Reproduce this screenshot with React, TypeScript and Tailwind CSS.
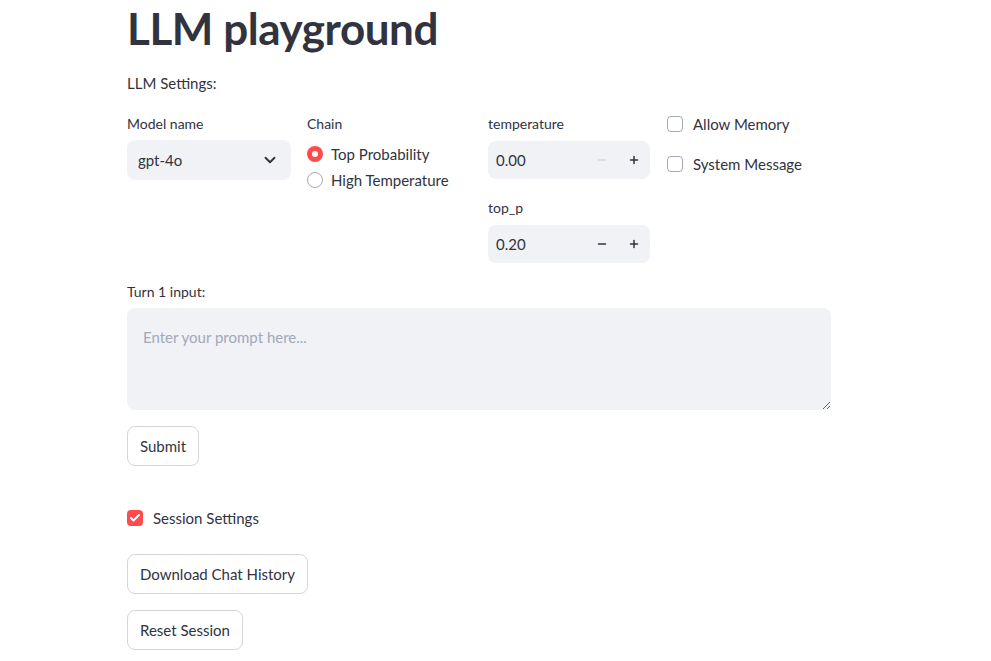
import { ChevronDown, Minus, Plus, Check } from "lucide-react";

const font = { fontFamily: '"Source Sans Pro", Lato, "Noto Sans", sans-serif' };

const NumberInput = ({ value, minusDisabled }: { value: string; minusDisabled?: boolean }) => (
  <div className="w-[162px] h-[38px] bg-[#f0f2f6] rounded-lg flex items-center pl-2">
    <span className="flex-1 text-[15px] text-[#31333f]">{value}</span>
    <button className={"w-8 h-full flex items-center justify-center " + (minusDisabled ? "text-[#d5d6d9]" : "text-[#31333f]")}>
      <Minus size={12} strokeWidth={3} />
    </button>
    <button className="w-8 h-full flex items-center justify-center text-[#31333f]">
      <Plus size={12} strokeWidth={3} />
    </button>
  </div>
);

const Radio = ({ label, checked }: { label: string; checked?: boolean }) => (
  <label className="flex items-center gap-2 h-[26px]">
    {checked ? (
      <span className="w-4 h-4 rounded-full bg-[#ff4b4b] flex items-center justify-center">
        <span className="w-1.5 h-1.5 rounded-full bg-white" />
      </span>
    ) : (
      <span className="w-4 h-4 rounded-full border border-[#a3a8b8] bg-white" />
    )}
    <span className="text-[15px] text-[#31333f]">{label}</span>
  </label>
);

const CheckBox = ({ label, checked }: { label: string; checked?: boolean }) => (
  <label className="flex items-center gap-2.5 h-6">
    {checked ? (
      <span className="w-4 h-4 rounded bg-[#ff4b4b] flex items-center justify-center text-white">
        <Check size={12} strokeWidth={4} />
      </span>
    ) : (
      <span className="w-4 h-4 rounded border border-[#a3a8b8] bg-white" />
    )}
    <span className="text-[15px] text-[#31333f]">{label}</span>
  </label>
);

const Btn = ({ children }: { children: string }) => (
  <button className="h-10 px-3 rounded-lg border border-[#d5d6d9] bg-white text-[15px] text-[#31333f] self-start">
    {children}
  </button>
);

export default function App() {
  return (
    <div className="min-h-screen bg-white text-[#31333f]" style={font}>
      <div className="w-[704px] ml-[127px] flex flex-col">
        <h1 className="text-[44px] font-bold leading-[56px] tracking-[-0.01em]">LLM playground</h1>
        <p className="text-[15px] leading-6 mt-[15px]">LLM Settings:</p>

        <div className="grid grid-cols-4 gap-4 mt-[17px]">
          <div className="flex flex-col">
            <span className="text-sm h-[24px] leading-[24px]">Model name</span>
            <div className="mt-1 w-full h-10 bg-[#f0f2f6] rounded-lg flex items-center justify-between pl-[11px] pr-[12px]">
              <span className="text-[15px]">gpt-4o</span>
              <ChevronDown size={18} strokeWidth={2.5} />
            </div>
          </div>
          <div className="flex flex-col">
            <span className="text-sm h-[24px] leading-[24px]">Chain</span>
            <div className="flex flex-col mt-[5px]">
              <Radio label="Top Probability" checked />
              <Radio label="High Temperature" />
            </div>
          </div>
          <div className="flex flex-col pl-px">
            <span className="text-sm h-[24px] leading-[24px]">temperature</span>
            <div className="mt-[5px]">
              <NumberInput value="0.00" minusDisabled />
            </div>
            <span className="text-sm h-[24px] leading-[24px] mt-[17px]">top_p</span>
            <div className="mt-[5px]">
              <NumberInput value="0.20" />
            </div>
          </div>
          <div className="flex flex-col gap-4">
            <CheckBox label="Allow Memory" />
            <CheckBox label="System Message" />
          </div>
        </div>

        <span className="text-sm mt-[17px] h-[24px] leading-[24px]">Turn 1 input:</span>
        <textarea
          placeholder="Enter your prompt here..."
          className="mt-[4px] h-[102px] w-full bg-[#f0f2f6] rounded-lg px-4 pt-[18px] pb-4 text-[15px] placeholder:text-[#a3a8b8] outline-none"
          style={font}
        />

        <div className="mt-[16px]">
          <Btn>Submit</Btn>
        </div>

        <div className="mt-[40px]">
          <CheckBox label="Session Settings" checked />
        </div>

        <div className="mt-[24px]">
          <Btn>Download Chat History</Btn>
        </div>
        <div className="mt-4">
          <Btn>Reset Session</Btn>
        </div>
      </div>
    </div>
  );
}
